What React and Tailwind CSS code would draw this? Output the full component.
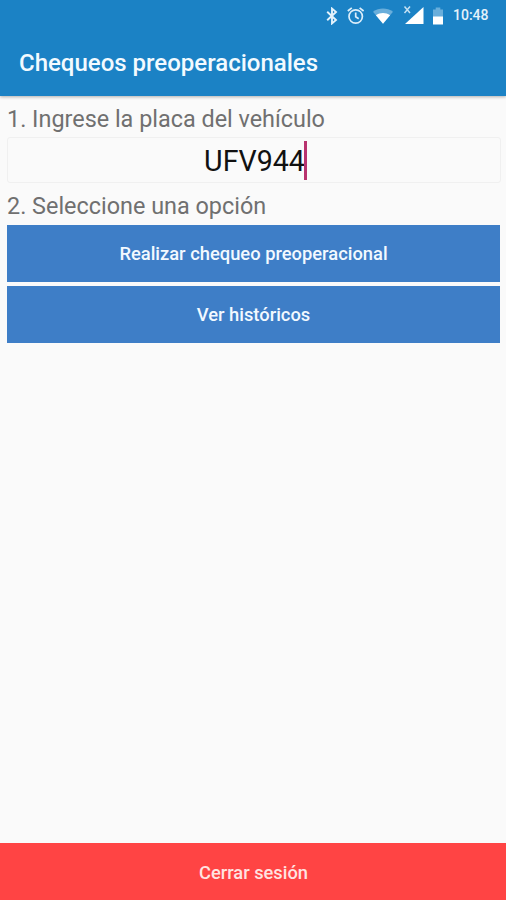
import { useState } from 'react';

function BluetoothIcon() {
  return (
    <svg className="h-[18px] w-3" viewBox="0 0 12 18" fill="none" stroke="#e4f2fb" strokeWidth="1.9">
      <path d="M1.2 4.8L10 13L6 16.4V1.6L10 5L1.2 13.2" />
    </svg>
  );
}

function AlarmIcon() {
  return (
    <svg className="ml-[9px] h-[18px] w-[18px]" viewBox="0 0 18 18" fill="none" stroke="#dceefa" strokeWidth="1.7">
      <circle cx="8.7" cy="9.5" r="6.7" />
      <path d="M.8 4L4.8 .8M16.6 4L12.6 .8M8.7 5.5V9.8L11.7 11.7" />
    </svg>
  );
}

function WifiIcon() {
  return (
    <svg className="ml-[7px] h-[18px] w-[22px]" viewBox="0 0 22 18">
      <path d="M1 4.7C7 .3 15 .3 21 4.7L11 16.7Z" fill="#69aedb" />
      <path d="M3.9 8.2C8.2 5.2 13.8 5.2 18.1 8.2L11 16.7Z" fill="#fff" />
    </svg>
  );
}

function SignalIcon() {
  return (
    <svg className="ml-[9px] h-5 w-[21px]" viewBox="0 0 21 20">
      <path d="M20.5 1V18H2Z" fill="#fff" />
      <path d="M1.5 .5L7 7M7 .5L1.5 7" stroke="#c5e1f3" strokeWidth="1.5" />
    </svg>
  );
}

function BatteryIcon() {
  return (
    <svg className="ml-2 h-[18px] w-3" viewBox="0 0 12 18">
      <path d="M1 2.5H3.7V.5H8.3V2.5H11V10H1Z" fill="#69aedb" />
      <path d="M1 9.5H11V17.5H1Z" fill="#fff" />
    </svg>
  );
}

function StatusBar() {
  return (
    <div className="flex h-[31px] items-center pl-[326px]">
      <BluetoothIcon />
      <AlarmIcon />
      <WifiIcon />
      <SignalIcon />
      <BatteryIcon />
      <span className="ml-[9px] text-[14px] font-medium text-[#e4f2fb]">10:48</span>
    </div>
  );
}

function OptionButton({ children }) {
  return (
    <button className="h-[57px] w-full bg-[#3e7ec7] text-[18.35px] font-medium text-[#f2f9ff]" type="button">
      {children}
    </button>
  );
}

export default function App() {
  const [plate] = useState('UFV944');

  return (
    <div className="flex h-[900px] w-[506px] flex-col overflow-hidden bg-[#fafafa] font-['Roboto',sans-serif]">
      <header className="h-24 shrink-0 bg-[#1b82c5] shadow-[0_1px_3px_rgba(0,0,0,0.3)]">
        <StatusBar />
        <h1 className="pl-[19px] text-[24px] leading-[65px] font-medium text-[#f2faff]">Chequeos preoperacionales</h1>
      </header>

      <main className="flex-1 pr-[5px] pl-[7px]">
        <p className="mt-[7px] h-[34px] text-[23.4px] leading-[32px] text-[#707070]">1. Ingrese la placa del vehículo</p>
        <div className="flex h-[46px] items-center justify-center rounded-[3px] border border-[#f0f0f0] pl-[3px] text-[28.6px] text-[#111]">
          <span className="pt-[3px]">{plate}</span>
          <span className="-ml-px h-[39px] w-[3px] bg-[#b8336f]" />
        </div>
        <p className="mt-[7px] h-[34px] text-[23.4px] leading-[32px] text-[#707070]">2. Seleccione una opción</p>
        <div className="flex flex-col gap-1 pt-px pr-px">
          <OptionButton>Realizar chequeo preoperacional</OptionButton>
          <OptionButton>Ver históricos</OptionButton>
        </div>
      </main>

      <button className="h-[57px] w-full shrink-0 bg-[#ff4444] pt-0.5 pl-px text-[18.3px] font-medium text-[#ffe3e1]" type="button">
        Cerrar sesión
      </button>
    </div>
  );
}
